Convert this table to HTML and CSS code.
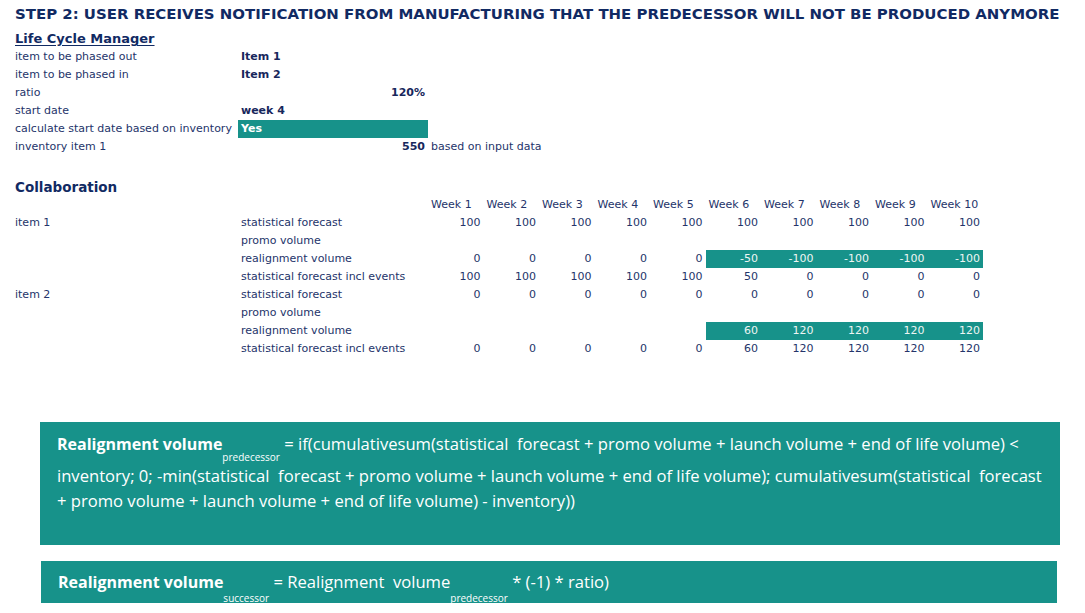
FILE: index.html
```html
<!DOCTYPE html>
<html>
<head>
<meta charset="utf-8">
<link rel="stylesheet" href="styles.css">
</head>
<body>
<div class="page">
  <h1 class="title">STEP 2: USER RECEIVES NOTIFICATION FROM MANUFACTURING THAT THE PREDECESSOR WILL NOT BE PRODUCED ANYMORE</h1>
  <h2 class="lcm-title">Life Cycle Manager</h2>
  <div class="lcm">
    <div class="lbl">item to be phased out</div><div class="val bold">Item 1</div><div></div>
    <div class="lbl">item to be phased in</div><div class="val bold">Item 2</div><div></div>
    <div class="lbl">ratio</div><div class="val bold num">120%</div><div></div>
    <div class="lbl">start date</div><div class="val bold">week 4</div><div></div>
    <div class="lbl">calculate start date based on inventory</div><div class="val bold teal">Yes</div><div></div>
    <div class="lbl">inventory item 1</div><div class="val bold num">550</div><div class="note">based on input data</div>
  </div>

  <h2 class="collab-title">Collaboration</h2>
  <div class="grid">
    <div></div><div></div>
    <div class="wk">Week 1</div><div class="wk">Week 2</div><div class="wk">Week 3</div><div class="wk">Week 4</div><div class="wk">Week 5</div><div class="wk">Week 6</div><div class="wk">Week 7</div><div class="wk">Week 8</div><div class="wk">Week 9</div><div class="wk">Week 10</div>

    <div>item 1</div><div>statistical forecast</div>
    <div class="n">100</div><div class="n">100</div><div class="n">100</div><div class="n">100</div><div class="n">100</div><div class="n">100</div><div class="n">100</div><div class="n">100</div><div class="n">100</div><div class="n">100</div>

    <div></div><div>promo volume</div>
    <div></div><div></div><div></div><div></div><div></div><div></div><div></div><div></div><div></div><div></div>

    <div></div><div>realignment volume</div>
    <div class="n">0</div><div class="n">0</div><div class="n">0</div><div class="n">0</div><div class="n">0</div><div class="n hl">-50</div><div class="n hl">-100</div><div class="n hl">-100</div><div class="n hl">-100</div><div class="n hl">-100</div>

    <div></div><div>statistical forecast incl events</div>
    <div class="n">100</div><div class="n">100</div><div class="n">100</div><div class="n">100</div><div class="n">100</div><div class="n">50</div><div class="n">0</div><div class="n">0</div><div class="n">0</div><div class="n">0</div>

    <div>item 2</div><div>statistical forecast</div>
    <div class="n">0</div><div class="n">0</div><div class="n">0</div><div class="n">0</div><div class="n">0</div><div class="n">0</div><div class="n">0</div><div class="n">0</div><div class="n">0</div><div class="n">0</div>

    <div></div><div>promo volume</div>
    <div></div><div></div><div></div><div></div><div></div><div></div><div></div><div></div><div></div><div></div>

    <div></div><div>realignment volume</div>
    <div></div><div></div><div></div><div></div><div></div><div class="n hl">60</div><div class="n hl">120</div><div class="n hl">120</div><div class="n hl">120</div><div class="n hl">120</div>

    <div></div><div>statistical forecast incl events</div>
    <div class="n">0</div><div class="n">0</div><div class="n">0</div><div class="n">0</div><div class="n">0</div><div class="n">60</div><div class="n">120</div><div class="n">120</div><div class="n">120</div><div class="n">120</div>
  </div>

  <div class="formula f1">
    <div class="line first"><b>Realignment volume</b><span class="sub">predecessor</span> = if(cumulativesum(statistical&nbsp; forecast + promo volume + launch volume + end of life volume) &lt;</div>
    <div class="line">inventory; 0; -min(statistical&nbsp; forecast + promo volume + launch volume + end of life volume); cumulativesum(statistical&nbsp; forecast</div>
    <div class="line">+ promo volume + launch volume + end of life volume) - inventory))</div>
  </div>

  <div class="formula f2">
    <div class="line first"><b>Realignment volume</b><span class="sub">successor</span> = Realignment&nbsp; volume<span class="sub">predecessor</span> * (-1) * ratio)</div>
  </div>
</div>
</body>
</html>
```

FILE: styles.css
```css
html, body {
  margin: 0;
  padding: 0;
  background: #ffffff;
}

.page {
  width: 1085px;
  height: 613px;
  overflow: hidden;
  font-family: "DejaVu Sans", "Open Sans", sans-serif;
  color: #24346a;
  font-size: 11px;
}

.title {
  margin: 0;
  padding-left: 15px;
  height: 29px;
  line-height: 29px;
  font-size: 14.95px;
  font-weight: bold;
  color: #112a63;
  white-space: nowrap;
}

.lcm-title {
  margin: 0;
  padding-left: 15px;
  height: 19px;
  line-height: 19px;
  font-size: 13px;
  font-weight: bold;
  color: #112a63;
  text-decoration: underline;
  text-underline-offset: 2px;
}

.lcm {
  display: grid;
  grid-template-columns: 223px 190px auto;
  grid-auto-rows: 18px;
  padding-left: 15px;
  line-height: 18px;
  white-space: nowrap;
}

.lcm .val {
  padding-left: 3px;
}

.lcm .num {
  text-align: right;
  padding-right: 3px;
}

.lcm .note {
  padding-left: 3px;
}

.bold {
  font-weight: bold;
  color: #17275c;
}

.teal {
  background: #17928a;
  color: #ffffff;
}

.collab-title {
  margin: 18px 0 0 0;
  padding-left: 15px;
  height: 22px;
  line-height: 26px;
  font-size: 13.5px;
  font-weight: bold;
  color: #112a63;
}

.grid {
  display: grid;
  grid-template-columns: 226px 187px repeat(10, 55.5px);
  grid-auto-rows: 18px;
  padding-left: 15px;
  line-height: 18px;
  white-space: nowrap;
}

.grid .wk {
  padding-left: 3px;
}

.grid .n {
  text-align: right;
  padding-right: 3px;
}

.grid .hl {
  background: #17928a;
  color: #eef5f3;
}

.formula {
  background: #17928a;
  color: #ffffff;
  font-family: "Open Sans", "Liberation Sans", sans-serif;
  font-size: 16.6px;
  padding-left: 17px;
  overflow: hidden;
  white-space: nowrap;
  box-sizing: border-box;
}

.f1 {
  margin-top: 64px;
  margin-left: 40px;
  width: 1020px;
  height: 123px;
  padding-top: 9px;
}

.f2 {
  margin-top: 16px;
  margin-left: 41px;
  width: 1016px;
  height: 42px;
  padding-top: 8px;
}

.formula b {
  font-weight: 700;
  font-size: 16px;
}

.line {
  height: 25px;
  line-height: 25px;
}

.line.first {
  height: 32px;
}

.sub {
  font-size: 10px;
  position: relative;
  top: 11px;
}

.f2 .sub {
  top: 14px;
}
```
